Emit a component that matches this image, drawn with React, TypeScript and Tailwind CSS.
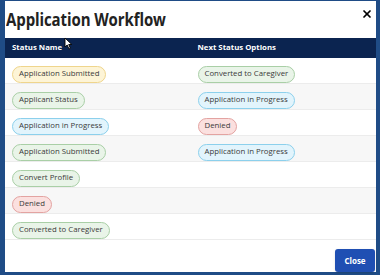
import { X } from 'lucide-react';

type Tone = 'yellow' | 'green' | 'blue' | 'red';

const toneClass: Record<Tone, string> = {
  yellow: 'bg-[#fdf4d6] border-[#efd58c]',
  green: 'bg-[#e9f4e8] border-[#a9cfa6]',
  blue: 'bg-[#e2f4fc] border-[#8cd0ec]',
  red: 'bg-[#fbe0df] border-[#e3a3a1]',
};

const rows: { from: [string, Tone]; to?: [string, Tone] }[] = [
  { from: ['Application Submitted', 'yellow'], to: ['Converted to Caregiver', 'green'] },
  { from: ['Applicant Status', 'green'], to: ['Application in Progress', 'blue'] },
  { from: ['Application in Progress', 'blue'], to: ['Denied', 'red'] },
  { from: ['Application Submitted', 'green'], to: ['Application in Progress', 'blue'] },
  { from: ['Convert Profile', 'green'] },
  { from: ['Denied', 'red'] },
  { from: ['Converted to Caregiver', 'green'] },
];

function Pill({ label, tone }: { label: string; tone: Tone }) {
  return (
    <span
      className={`inline-flex items-center h-[17px] px-[6px] rounded-full border text-[7.8px] text-[#3a3a3a] leading-none ${toneClass[tone]}`}
    >
      {label}
    </span>
  );
}

export default function App() {
  return (
    <div className="w-[380px] h-[275px] bg-[#1f4c86] pl-[5px] pr-[4px] pt-[1px] pb-[3px] font-['Open_Sans',sans-serif]">
      <div className="relative h-full bg-white flex flex-col">
        <div className="flex items-center justify-between h-[37px] pl-[1px] pr-[3px]">
          <h1 className="text-[15px] font-bold text-[#222] tracking-[-0.1px] scale-y-[1.22] origin-left">
            Application Workflow
          </h1>
          <X className="w-[12px] h-[12px] text-black -mt-[11px]" strokeWidth={3.5} />
        </div>

        <div className="grid grid-cols-2 bg-[#0b2450] h-[20px] items-center text-white text-[7.8px] font-bold">
          <div className="pl-[7px]">Status Name</div>
          <div className="pl-[7px]">Next Status Options</div>
        </div>

        {rows.map((r, i) => (
          <div
            key={i}
            className={`grid grid-cols-2 items-center h-[26px] border-b border-[#ececec] ${
              i % 2 === 1 ? 'bg-[#f7f7f7]' : 'bg-white'
            }`}
          >
            <div className="pl-[7px]">
              <Pill label={r.from[0]} tone={r.from[1]} />
            </div>
            <div className="pl-[7px]">{r.to && <Pill label={r.to[0]} tone={r.to[1]} />}</div>
          </div>
        ))}

        <div className="flex justify-end mt-auto pr-[1px]">
          <button className="w-[40px] h-[23px] rounded-[3px] bg-[#1f4fb3] text-white text-[8px] font-bold shadow-sm">
            Close
          </button>
        </div>

        {/* mouse pointer from the capture */}
        <svg className="absolute left-[59px] top-[36px]" width="9" height="13" viewBox="0 0 9 13">
          <path d="M1 1 L1 10 L3.2 8 L5 12 L6.4 11.3 L4.7 7.5 L7.8 7.5 Z" fill="#fff" stroke="#000" strokeWidth="0.9" strokeLinejoin="round" />
        </svg>
      </div>
    </div>
  );
}
